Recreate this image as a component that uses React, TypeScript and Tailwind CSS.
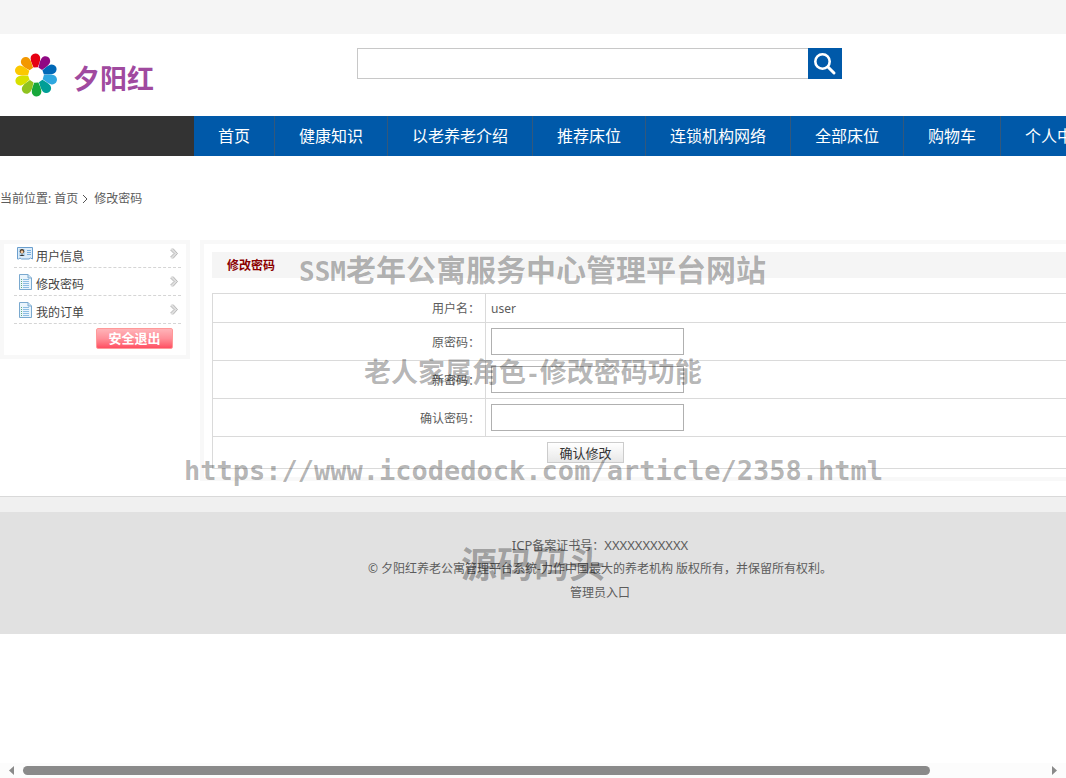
import { ReactNode } from 'react';

interface MenuItemProps {
    icon: ReactNode;
    label: string;
}

interface PasswordRowProps {
    id: string;
    label: string;
}

const navItems = ['首页', '健康知识', '以老养老介绍', '推荐床位', '连锁机构网络', '全部床位', '购物车', '个人中心'];

const petals = [
    '#e60012', '#8f0783', '#0068b7', '#2ea7e0', '#009e96',
    '#18a83b', '#8fc31f', '#d7e000', '#fcc800', '#f39800',
];

const LogoIcon = () => (
    <svg viewBox="-22 -22 44 44" className="h-11 w-11" aria-hidden="true">
        {petals.map((color, i) => (
            <path
                key={color}
                d="M-2.2 -7.6 C-2.8 -10 -4.8 -13 -4.8 -16.8 A4.8 4.8 0 0 1 4.8 -16.8 C4.8 -13 2.8 -10 2.2 -7.6 Z"
                fill={color}
                transform={`rotate(${i * 36 - 2})`}
            />
        ))}
    </svg>
);

const SearchIcon = () => (
    <svg viewBox="0 0 24 24" className="h-6 w-6" fill="none" stroke="#fff" aria-hidden="true">
        <circle cx="9.5" cy="9.5" r="7.2" strokeWidth="2.6" />
        <path d="M15 15 L21 21" strokeWidth="3" strokeLinecap="round" />
    </svg>
);

const CardIcon = () => (
    <svg viewBox="0 0 16 13" className="h-[13px] w-4" aria-hidden="true">
        <path d="M.5 .5 H15.5 V12 L13.5 11 L12 12 H4.5 L3 11 L1.5 12 H.5 Z" fill="#dcecf9" stroke="#6b9fce" />
        <rect x="2" y="2" width="6" height="7" fill="#b8d8f0" />
        <circle cx="5" cy="4.2" r="2.2" fill="#4a3520" />
        <circle cx="5" cy="5" r="1.4" fill="#f3c79a" />
        <path d="M2.5 9 Q5 6 7.5 9 Z" fill="#333" />
        <path d="M10 3.5 H14 M10 5.5 H14 M10 7.5 H14" stroke="#7aaedb" />
    </svg>
);

const PageIcon = () => (
    <svg viewBox="0 0 13 16" className="h-4 w-[13px]" aria-hidden="true">
        <path d="M.5 .5 H9 L12.5 4 V15.5 H.5 Z" fill="#e9f4fc" stroke="#7aa9cf" />
        <path d="M9 .5 V4 H12.5" fill="#cfe4f5" stroke="#7aa9cf" />
        <path d="M2 5.5 H3 M2 7.5 H3 M2 9.5 H3 M2 11.5 H3 M2 13.5 H3" stroke="#5fae7c" />
        <path d="M4 5.5 H10 M4 7.5 H10 M4 9.5 H10 M4 11.5 H10 M4 13.5 H10" stroke="#8dbde3" />
    </svg>
);

const ArrowIcon = () => (
    <svg viewBox="0 0 8 11" className="mb-1 ml-auto mr-[3px] h-[11px] w-2" aria-hidden="true">
        <path d="M1 .5 H3 L7.5 5.5 L3 10.5 H1 L.5 9 L4 5.5 L.5 2 Z" fill="#dedede" />
        <path d="M3 .5 L7.5 5.5 L3 10.5 M.5 2 L4 5.5 L.5 9" fill="none" stroke="#aaa" strokeWidth=".8" />
    </svg>
);

const MenuItem = ({ icon, label }: MenuItemProps) => (
    <li className="h-6 border-b border-dashed border-[#d5d5d5]">
        <a href="#" className="flex h-full items-center text-[#444]">
            <span className="mb-1 flex w-[22px] justify-center">{icon}</span>
            <span className="pt-0.5">{label}</span>
            <ArrowIcon />
        </a>
    </li>
);

const PasswordRow = ({ id, label }: PasswordRowProps) => (
    <tr className="h-[38px]">
        <td className="border border-[#dadada] px-[5px] pt-0.5 text-right">
            <label htmlFor={id}>{label}</label>
        </td>
        <td className="border border-[#dadada] px-[5px]">
            <input id={id} type="password" className="block h-[27px] w-[193px] border border-[#b0b0b0] bg-white px-1 outline-none" />
        </td>
    </tr>
);

const Header = () => (
    <header>
        <div className="h-[34px] bg-[#f5f5f5]" />
        <div className="flex h-[82px] items-start">
            <a href="#" className="flex w-[357px] items-center pl-3.5 pt-[19px]">
                <LogoIcon />
                <span className="pl-[15px] pt-2 text-[27px] leading-9 font-bold text-[#a04a9f]">夕阳红</span>
            </a>
            <form className="mt-3.5 flex h-[31px]">
                <input type="text" aria-label="搜索" className="w-[451px] border border-r-0 border-[#c8c8c8] px-2 outline-none" />
                <button type="button" aria-label="搜索" className="flex w-[34px] items-center justify-center bg-[#0059a9]">
                    <SearchIcon />
                </button>
            </form>
        </div>
        <nav className="flex h-10 bg-[#0059a9] text-base">
            <div className="w-[194px] bg-[#333]" />
            {navItems.map((item) => (
                <a key={item} href="#" className="border-r border-[#33587c] px-6 leading-10 text-white">
                    {item}
                </a>
            ))}
        </nav>
    </header>
);

const Sidebar = () => (
    <aside className="w-[190px] border-4 border-[#f8f8f8] pb-1.5">
        <ul className="ml-2.5 mr-[5px] flex flex-col gap-1">
            <MenuItem icon={<CardIcon />} label="用户信息" />
            <MenuItem icon={<PageIcon />} label="修改密码" />
            <MenuItem icon={<PageIcon />} label="我的订单" />
        </ul>
        <button
            type="button"
            className="ml-[92px] mt-1 block h-[21px] w-[77px] rounded-xs border border-[#f99] bg-linear-to-b from-[#ffb3b8] via-[#ff8f99] to-[#ff4d62] text-[13px] leading-[19px] font-bold text-white"
        >
            安全退出
        </button>
    </aside>
);

const PasswordForm = () => (
    <section className="flex-1 border-4 border-[#f8f8f8] p-2">
        <h1 className="h-[26px] bg-[#f5f5f5] pl-[15px] text-xs leading-7 font-bold text-[#8b0000]">修改密码</h1>
        <form className="mt-[15px]">
            <table className="w-full table-fixed border-collapse">
                <colgroup>
                    <col className="w-[28%]" />
                    <col />
                </colgroup>
                <tbody>
                    <tr className="h-[29px]">
                        <td className="border border-[#dadada] px-[5px] pt-0.5 text-right">用户名：</td>
                        <td className="border border-[#dadada] px-[5px] pt-0.5">user</td>
                    </tr>
                    <PasswordRow id="old-password" label="原密码：" />
                    <PasswordRow id="new-password" label="新密码：" />
                    <PasswordRow id="confirm-password" label="确认密码：" />
                    <tr className="h-8">
                        <td colSpan={2} className="border border-[#dadada] pl-[334px]">
                            <button
                                type="button"
                                className="block h-[21px] w-[77px] border border-[#ccc] bg-linear-to-b from-white to-[#e8e8e8] text-[13px] leading-[21px] text-[#333]"
                            >
                                确认修改
                            </button>
                        </td>
                    </tr>
                </tbody>
            </table>
        </form>
    </section>
);

const Footer = () => (
    <footer className="mt-[15px] border-t border-[#d9d9d9]">
        <div className="h-[15px] bg-[#f0f0f0]" />
        <div className="h-[122px] bg-[#e1e1e1] pt-[21px] text-center leading-6">
            <p className="h-6">
                <span className="text-[13px]">ICP</span>备案证书号：<span className="text-[13px]">XXXXXXXXXXX</span>
            </p>
            <p>© 夕阳红养老公寓管理平台系统-力作中国最大的养老机构 版权所有，并保留所有权利。</p>
            <p>
                <a href="#">管理员入口</a>
            </p>
        </div>
    </footer>
);

// Stamped text that floats above the whole page
const Watermarks = () => (
    <div className="pointer-events-none absolute inset-0 font-bold whitespace-nowrap text-black/30">
        <p className="absolute left-[299px] top-[250px] text-[30px] leading-10">
            <span className="font-['DejaVu_Sans_Mono',monospace] text-[26px]">SSM</span>老年公寓服务中心管理平台网站
        </p>
        <p className="absolute left-[364px] top-[352px] text-[27px] leading-10">
            老人家属角色<span className="font-['DejaVu_Sans_Mono',monospace] text-[23px]">-</span>修改密码功能
        </p>
        <p className="absolute left-[184px] top-[451px] font-['DejaVu_Sans_Mono',monospace] text-[27px] leading-10">
            https://www.icodedock.com/article/2358.html
        </p>
        <p className="absolute left-[461px] top-[541px] text-[36px] leading-[48px]">源码码头</p>
    </div>
);

const ScrollBar = () => (
    <div className="flex h-[15px] items-center bg-[#fcfcfc]">
        <svg viewBox="0 0 23 15" className="h-[15px] w-[23px]" fill="#8a8a8a" aria-hidden="true">
            <path d="M14 3 V12 L9 7.5 Z" />
        </svg>
        <div className="flex-1">
            <div className="h-[9px] w-8/9 rounded-full bg-[#8a8a8a]" />
        </div>
        <svg viewBox="0 0 23 15" className="h-[15px] w-[23px]" fill="#8a8a8a" aria-hidden="true">
            <path d="M9 3 V12 L14 7.5 Z" />
        </svg>
    </div>
);

export default function App() {
    return (
        <div className="relative flex h-screen flex-col overflow-hidden bg-white font-['Noto_Sans','Noto_Sans_CJK_SC',sans-serif] text-xs text-[#5c5c5c]">
            <div className="min-h-0 flex-1 overflow-hidden">
                <div className="min-w-[1200px]">
                    <Header />
                    <div className="flex h-[84px] items-center pt-0.5">
                        <span>当前位置:</span>
                        <a href="#" className="ml-[3px]">首页</a>
                        <svg viewBox="0 0 6 10" className="ml-1 mr-[6px] h-2.5 w-1.5" fill="none" stroke="#555" aria-hidden="true">
                            <path d="M1 1 L5 5 L1 9" />
                        </svg>
                        <span>修改密码</span>
                    </div>
                    <main className="flex items-start gap-2.5">
                        <Sidebar />
                        <PasswordForm />
                    </main>
                    <Footer />
                </div>
            </div>
            <ScrollBar />
            <Watermarks />
        </div>
    );
}
